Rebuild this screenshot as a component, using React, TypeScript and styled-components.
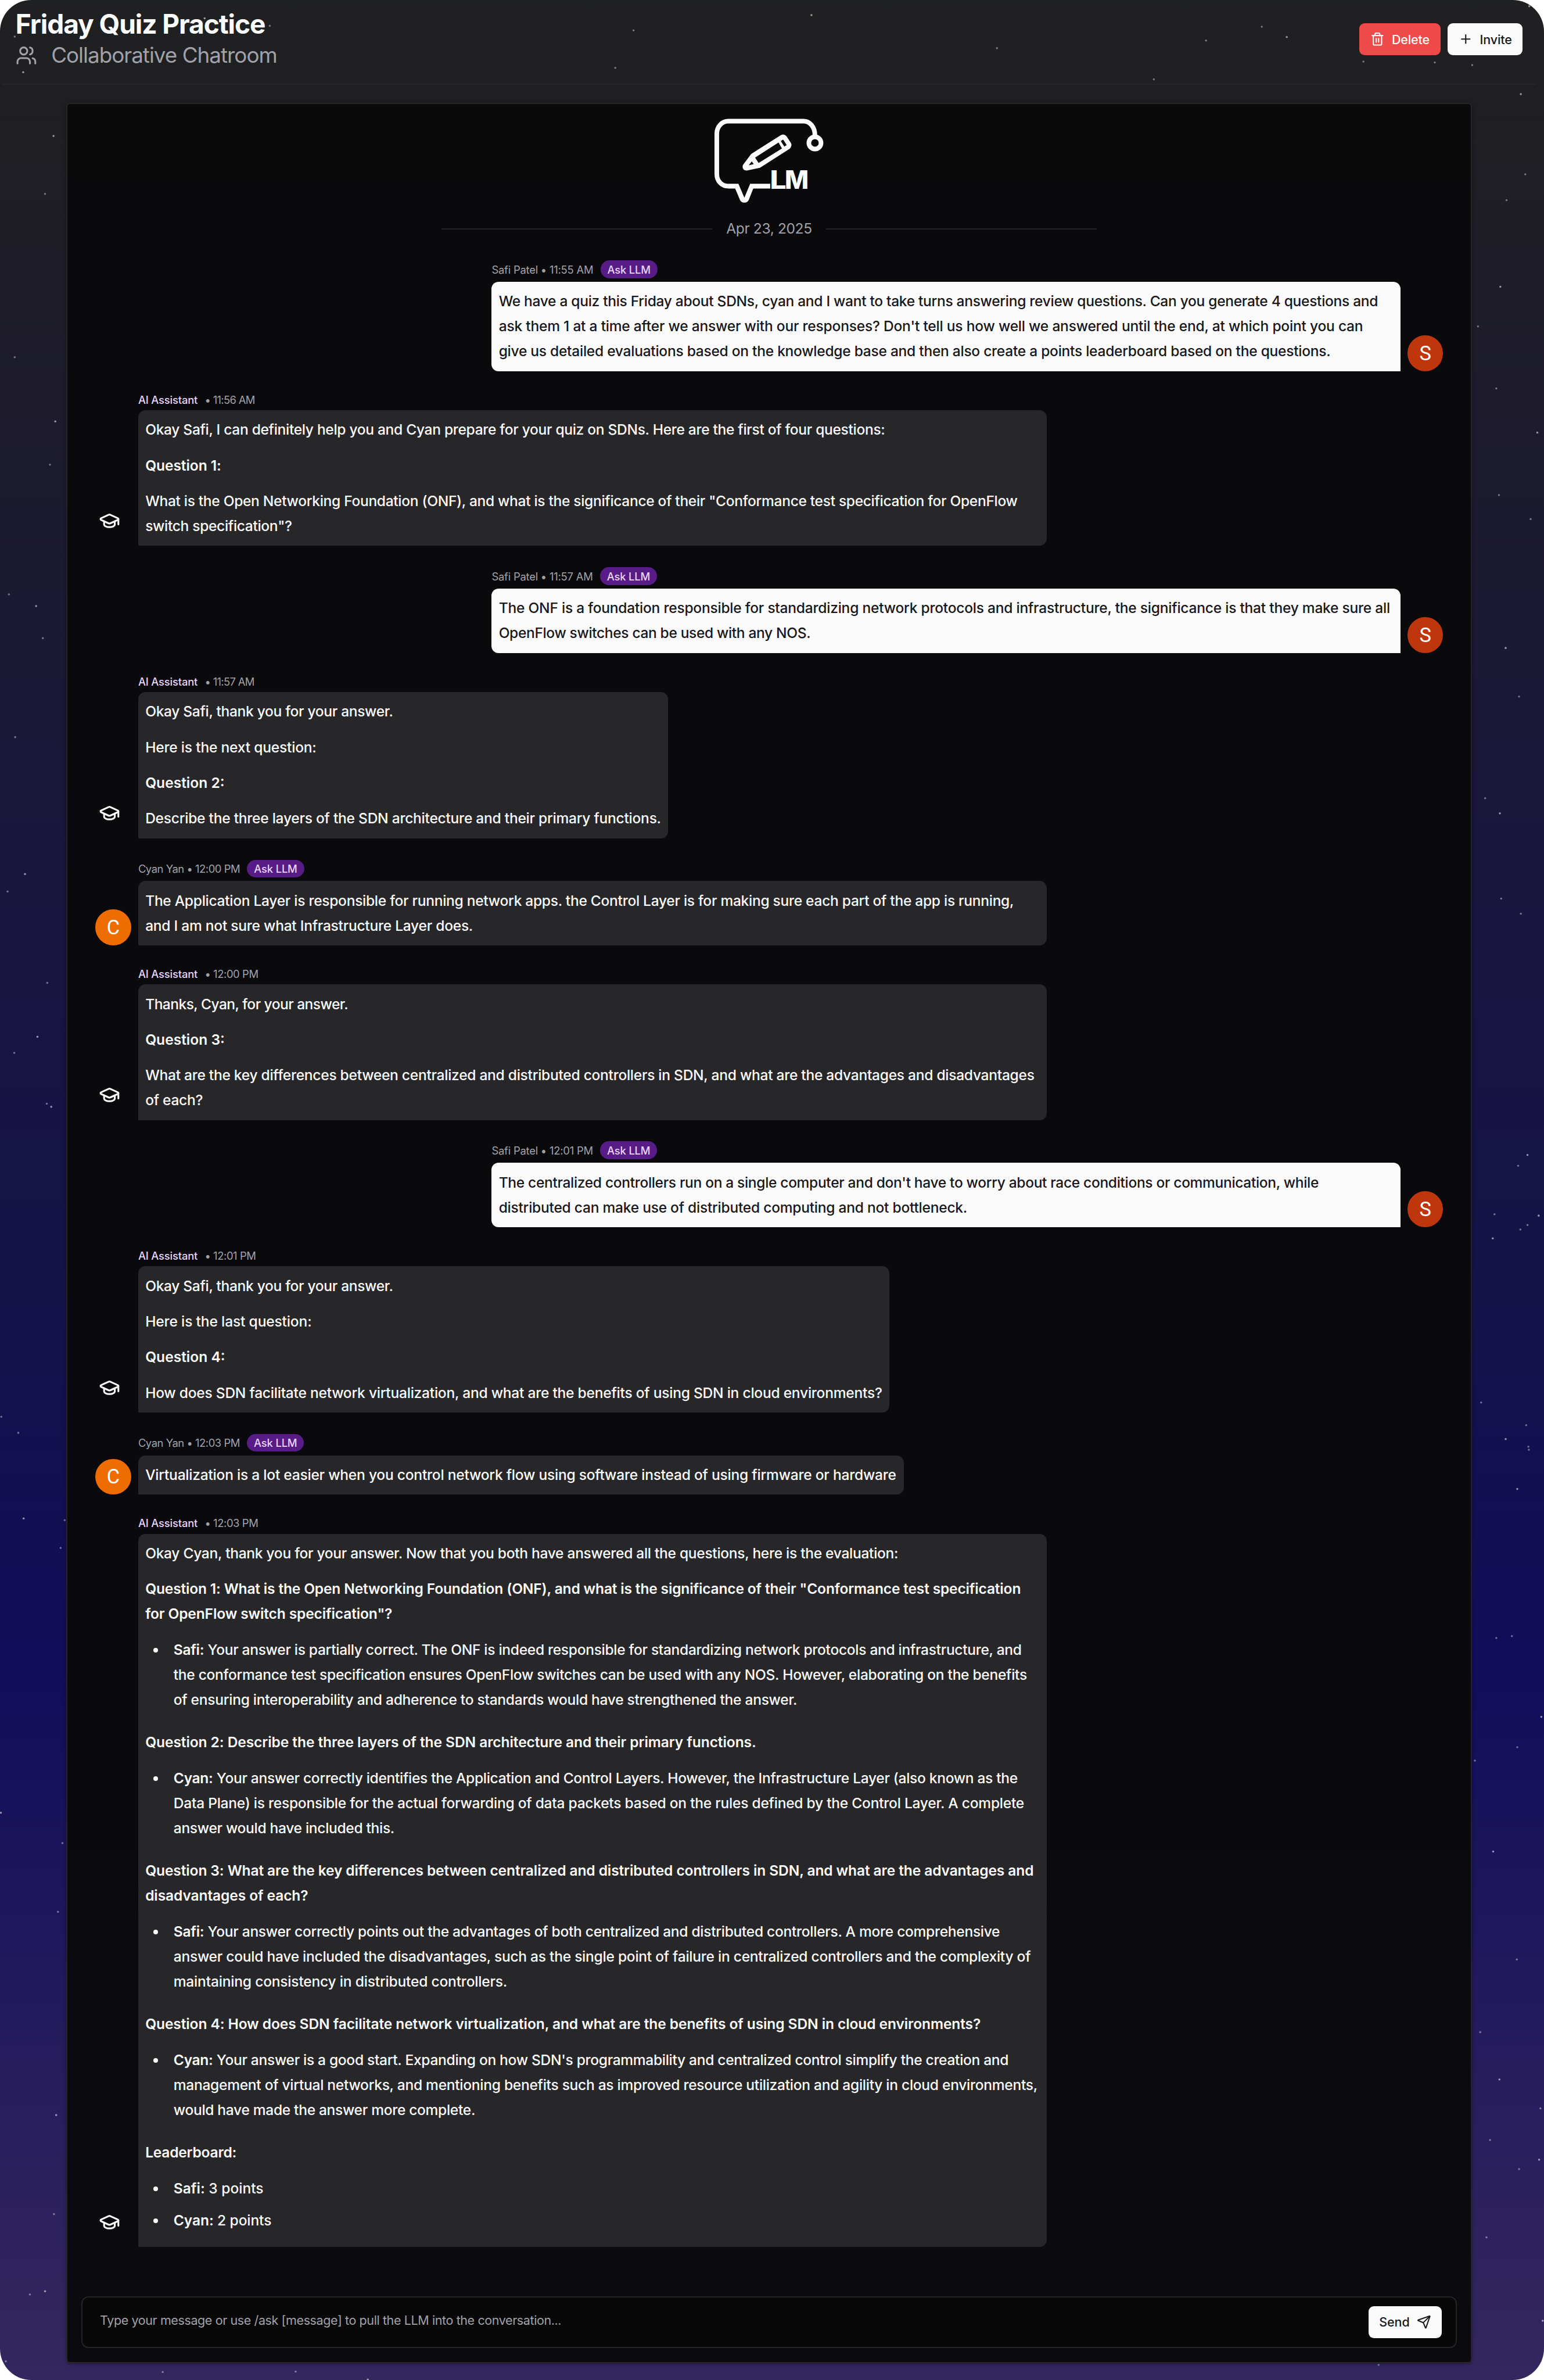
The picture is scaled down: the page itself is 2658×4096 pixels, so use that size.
import React from "react";
import styled, { createGlobalStyle, css } from "styled-components";
import { GraduationCap, Plus, Send, Trash2, Users } from "lucide-react";

const Global = createGlobalStyle`
  html { font-size: 24.5613px; background: #fff; }
  body { margin: 0; background: #fff; -webkit-font-smoothing: antialiased; }
  *, *::before, *::after { box-sizing: border-box; }
`;

const Page = styled.div`
  position: relative;
  width: 2658px;
  height: 4096px;
  overflow: hidden;
  border-radius: 2.2rem;
  background: linear-gradient(
    180deg,
    #1f2021 0%,
    #1f1f23 5%,
    #1c1a30 22%,
    #181540 40%,
    #151249 54%,
    #110d59 70%,
    #241b5d 85%,
    #34275f 100%
  );
  color: #fafafa;
  font-family: Inter, "Liberation Sans", sans-serif;
  font-size: 1rem;
  display: flex;
  flex-direction: column;
`;

const Starfield = styled.svg`
  position: absolute;
  inset: 0;
  width: 100%;
  height: 100%;
`;

const Header = styled.header`
  position: relative;
  flex: none;
  display: flex;
  justify-content: space-between;
  align-items: flex-start;
  height: 5.9375rem;
  margin: 0 0.5rem 0 0.09rem;
  padding: 0 1rem;
  border-bottom: 2px solid #262628;
`;

const Heading = styled.div`
  padding-top: 0.69rem;
`;

const Title = styled.h1`
  margin: 0 0 0.44rem;
  font-size: 1.875rem;
  line-height: 2rem;
  font-weight: 700;
  letter-spacing: -0.0235em;
  white-space: nowrap;
`;

const Subtitle = styled.div`
  display: flex;
  align-items: center;
  gap: 1rem;
  height: 1.5rem;
  color: #a1a1aa;
  font-size: 1.5rem;
  line-height: 1.5rem;
  letter-spacing: -0.027em;
  white-space: nowrap;
  svg {
    width: 1.5rem;
    height: 1.5rem;
  }
`;

const Actions = styled.div`
  display: flex;
  gap: 0.5rem;
  padding-top: 1.625rem;
`;

const Button = styled.button<{ $tone?: "danger" | "light"; $w: number }>`
  display: flex;
  align-items: center;
  justify-content: center;
  gap: 0.5rem;
  flex: none;
  width: ${(p) => p.$w}rem;
  height: 2.25rem;
  padding: 0;
  border: 0;
  border-radius: 0.375rem;
  font-family: inherit;
  font-size: 0.875rem;
  font-weight: 500;
  letter-spacing: -0.005em;
  white-space: nowrap;
  background: ${(p) => (p.$tone === "danger" ? "#ee4a49" : "#fafafa")};
  color: ${(p) => (p.$tone === "danger" ? "#fafafa" : "#18181b")};
  svg {
    width: 1rem;
    height: 1rem;
  }
`;

const Panel = styled.main`
  position: relative;
  flex: none;
  display: flex;
  flex-direction: column;
  width: 98.5625rem;
  height: 158.4rem;
  margin: 1.25rem 0 0 4.625rem;
  border: 2px solid #252527;
  border-radius: 0.25rem;
  background: rgba(9, 9, 11, 0.95);
  box-shadow: 0 0.06rem 0.2rem rgba(0, 0, 0, 0.35);
`;

const Logo = styled.svg`
  display: block;
  width: 7.625rem;
  height: 5.906rem;
  margin: 1.04rem auto 0;
  fill: #fafafa;
`;

const DateRow = styled.div`
  display: flex;
  align-items: center;
  width: 45.9rem;
  margin: 1.19rem auto 1.6rem;
  color: #a1a1aa;
  font-size: 1rem;
  line-height: 1.25rem;
  letter-spacing: -0.0156em;
`;

const Rule = styled.span`
  flex: 1;
  height: 2px;
  background: #242427;
`;

const DateText = styled.span`
  width: 8rem;
  text-align: center;
  white-space: nowrap;
`;

const Chat = styled.section`
  display: flex;
  flex-direction: column;
  gap: 1.5rem;
  padding: 0 1.96rem 0 1.98rem;
`;

const Row = styled.article<{ $own?: boolean }>`
  display: flex;
  align-items: flex-end;
  justify-content: ${(p) => (p.$own ? "flex-end" : "flex-start")};
  gap: 0.5rem;
`;

const Avatar = styled.div<{ $color: string }>`
  display: flex;
  align-items: center;
  justify-content: center;
  flex: none;
  width: 2.5rem;
  height: 2.5rem;
  border-radius: 50%;
  background: ${(p) => p.$color};
  color: #fff;
  font-family: Roboto, sans-serif;
  font-size: 1.4rem;
`;

const Bot = styled.div`
  flex: none;
  width: 2.5rem;
  padding: 0 0 1rem 0.25rem;
  svg {
    display: block;
    width: 1.5rem;
    height: 1.5rem;
  }
`;

const Column = styled.div<{ $w: number }>`
  flex: none;
  width: ${(p) => p.$w}rem;
`;

const Meta = styled.div<{ $tall?: boolean }>`
  display: flex;
  align-items: center;
  height: ${(p) => (p.$tall ? 1.25 : 1)}rem;
  margin-bottom: 0.25rem;
  color: #a1a1aa;
  font-size: 0.75rem;
  letter-spacing: -0.01em;
  white-space: nowrap;
`;

const MetaText = styled.span<{ $t: number }>`
  letter-spacing: ${(p) => p.$t}em;
`;

const BotName = styled.span`
  margin-right: 0.5rem;
  color: #e9d5ff;
  font-weight: 500;
`;

const Badge = styled.span`
  display: flex;
  align-items: center;
  justify-content: center;
  width: 4rem;
  height: 1.25rem;
  margin-left: 0.5rem;
  border-radius: 0.625rem;
  background: #581c87;
  color: #e9d5ff;
  font-weight: 500;
`;

const Bubble = styled.div<{ $own?: boolean }>`
  display: flex;
  flex-direction: column;
  gap: 0.75rem;
  padding: 0.5rem;
  line-height: 1.75rem;
  font-weight: 500;
  ${(p) =>
    p.$own
      ? css`
          border-radius: 0.5rem 0.5rem 0 0.5rem;
          background: #fafafa;
          color: #18181b;
        `
      : css`
          border-radius: 0.5rem 0.5rem 0.5rem 0;
          background: #27272a;
          color: #fafafa;
        `}
`;

const Paragraph = styled.p<{ $strong?: boolean }>`
  margin: 0;
  font-weight: ${(p) => (p.$strong ? 600 : "inherit")};
`;

const List = styled.ul`
  margin: 0;
  padding: 0;
  list-style: none;
`;

const Item = styled.li`
  display: flex;
  margin-bottom: 0.5rem;
  &::before {
    content: "";
    flex: none;
    width: 0.32rem;
    height: 0.32rem;
    margin: 0.74rem 1.1rem 0 0.56rem;
    border-radius: 50%;
    background: #fafafa;
  }
`;

const Line = styled.span<{ $t?: number }>`
  display: block;
  white-space: nowrap;
  letter-spacing: ${(p) => p.$t ?? 0}em;
`;

const Strong = styled.b`
  font-weight: 600;
`;

const Composer = styled.div`
  display: flex;
  align-items: center;
  justify-content: space-between;
  height: 3.625rem;
  margin: auto 1rem 0.98rem;
  padding: 0 0.98rem 0 1.22rem;
  border: 2px solid #252527;
  border-radius: 0.5rem;
  background: #080809;
  color: #a1a1aa;
  font-size: 0.875rem;
`;

const Placeholder = styled.span`
  padding-bottom: 0.27rem;
  letter-spacing: -0.018em;
  white-space: nowrap;
`;

/* A line of text and its tracking in em. */
type TextLine = [string, number];

type Block =
  | { kind: "p" | "strong"; lines: TextLine[] }
  | { kind: "list"; items: { who: string; lines: TextLine[] }[] };

type Message = {
  from: "Safi Patel" | "Cyan Yan" | "AI Assistant";
  time: string;
  width: number;
  blocks: Block[];
};

const FULL = 63.6875;

const messages: Message[] = [
  {
    from: "Safi Patel", time: "11:55 AM", width: FULL,
    blocks: [{ kind: "p", lines: [
      ["We have a quiz this Friday about SDNs, cyan and I want to take turns answering review questions. Can you generate 4 questions and", -0.0125],
      ["ask them 1 at a time after we answer with our responses? Don't tell us how well we answered until the end, at which point you can", -0.0087],
      ["give us detailed evaluations based on the knowledge base and then also create a points leaderboard based on the questions.", -0.0108],
    ] }],
  },
  {
    from: "AI Assistant", time: "11:56 AM", width: FULL,
    blocks: [
      { kind: "p", lines: [["Okay Safi, I can definitely help you and Cyan prepare for your quiz on SDNs. Here are the first of four questions:", -0.0126]] },
      { kind: "strong", lines: [["Question 1:", -0.003]] },
      { kind: "p", lines: [
        ["What is the Open Networking Foundation (ONF), and what is the significance of their \"Conformance test specification for OpenFlow", -0.0128],
        ["switch specification\"?", -0.013],
      ] },
    ],
  },
  {
    from: "Safi Patel", time: "11:57 AM", width: FULL,
    blocks: [{ kind: "p", lines: [
      ["The ONF is a foundation responsible for standardizing network protocols and infrastructure, the significance is that they make sure all", -0.0095],
      ["OpenFlow switches can be used with any NOS.", -0.0145],
    ] }],
  },
  {
    from: "AI Assistant", time: "11:57 AM", width: 37.14,
    blocks: [
      { kind: "p", lines: [["Okay Safi, thank you for your answer.", -0.013]] },
      { kind: "p", lines: [["Here is the next question:", -0.008]] },
      { kind: "strong", lines: [["Question 2:", 0]] },
      { kind: "p", lines: [["Describe the three layers of the SDN architecture and their primary functions.", -0.0102]] },
    ],
  },
  {
    from: "Cyan Yan", time: "12:00 PM", width: FULL,
    blocks: [{ kind: "p", lines: [
      ["The Application Layer is responsible for running network apps. the Control Layer is for making sure each part of the app is running,", -0.0116],
      ["and I am not sure what Infrastructure Layer does.", -0.0102],
    ] }],
  },
  {
    from: "AI Assistant", time: "12:00 PM", width: FULL,
    blocks: [
      { kind: "p", lines: [["Thanks, Cyan, for your answer.", -0.0219]] },
      { kind: "strong", lines: [["Question 3:", 0]] },
      { kind: "p", lines: [
        ["What are the key differences between centralized and distributed controllers in SDN, and what are the advantages and disadvantages", -0.0111],
        ["of each?", -0.011],
      ] },
    ],
  },
  {
    from: "Safi Patel", time: "12:01 PM", width: FULL,
    blocks: [{ kind: "p", lines: [
      ["The centralized controllers run on a single computer and don't have to worry about race conditions or communication, while", -0.0136],
      ["distributed can make use of distributed computing and not bottleneck.", -0.01],
    ] }],
  },
  {
    from: "AI Assistant", time: "12:01 PM", width: 52.65,
    blocks: [
      { kind: "p", lines: [["Okay Safi, thank you for your answer.", -0.013]] },
      { kind: "p", lines: [["Here is the last question:", -0.006]] },
      { kind: "strong", lines: [["Question 4:", 0]] },
      { kind: "p", lines: [["How does SDN facilitate network virtualization, and what are the benefits of using SDN in cloud environments?", -0.0097]] },
    ],
  },
  {
    from: "Cyan Yan", time: "12:03 PM", width: 53.65,
    blocks: [{ kind: "p", lines: [["Virtualization is a lot easier when you control network flow using software instead of using firmware or hardware", -0.0092]] }],
  },
  {
    from: "AI Assistant", time: "12:03 PM", width: FULL,
    blocks: [
      { kind: "p", lines: [["Okay Cyan, thank you for your answer. Now that you both have answered all the questions, here is the evaluation:", -0.0119]] },
      { kind: "strong", lines: [
        ["Question 1: What is the Open Networking Foundation (ONF), and what is the significance of their \"Conformance test specification", -0.0071],
        ["for OpenFlow switch specification\"?", -0.0055],
      ] },
      { kind: "list", items: [{ who: "Safi:", lines: [
        [" Your answer is partially correct. The ONF is indeed responsible for standardizing network protocols and infrastructure, and", -0.0122],
        ["the conformance test specification ensures OpenFlow switches can be used with any NOS. However, elaborating on the benefits", -0.0119],
        ["of ensuring interoperability and adherence to standards would have strengthened the answer.", -0.0112],
      ] }] },
      { kind: "strong", lines: [["Question 2: Describe the three layers of the SDN architecture and their primary functions.", -0.0035]] },
      { kind: "list", items: [{ who: "Cyan:", lines: [
        [" Your answer correctly identifies the Application and Control Layers. However, the Infrastructure Layer (also known as the", -0.0126],
        ["Data Plane) is responsible for the actual forwarding of data packets based on the rules defined by the Control Layer. A complete", -0.01],
        ["answer would have included this.", -0.0125],
      ] }] },
      { kind: "strong", lines: [
        ["Question 3: What are the key differences between centralized and distributed controllers in SDN, and what are the advantages and", -0.0046],
        ["disadvantages of each?", -0.0045],
      ] },
      { kind: "list", items: [{ who: "Safi:", lines: [
        [" Your answer correctly points out the advantages of both centralized and distributed controllers. A more comprehensive", -0.0117],
        ["answer could have included the disadvantages, such as the single point of failure in centralized controllers and the complexity of", -0.0104],
        ["maintaining consistency in distributed controllers.", -0.008],
      ] }] },
      { kind: "strong", lines: [["Question 4: How does SDN facilitate network virtualization, and what are the benefits of using SDN in cloud environments?", -0.0044]] },
      { kind: "list", items: [{ who: "Cyan:", lines: [
        [" Your answer is a good start. Expanding on how SDN's programmability and centralized control simplify the creation and", -0.0125],
        ["management of virtual networks, and mentioning benefits such as improved resource utilization and agility in cloud environments,", -0.0113],
        ["would have made the answer more complete.", -0.0125],
      ] }] },
      { kind: "strong", lines: [["Leaderboard:", -0.009]] },
      { kind: "list", items: [
        { who: "Safi:", lines: [[" 3 points", 0]] },
        { who: "Cyan:", lines: [[" 2 points", -0.004]] },
      ] },
    ],
  },
];

const stars: [number, number][] = [
  [459, 41], [605, 58], [33, 82], [52, 162], [2705, 91], [2830, 60], [2886, 83], [3058, 138], [3218, 140], [3430, 14],
  [1380, 152], [1421, 68], [1820, 34], [2236, 108], [2588, 178],
  [120, 305], [101, 435], [33, 801], [124, 945], [112, 1042], [20, 1333], [81, 1359], [96, 1431], [34, 1653], [56, 1960],
  [17, 1999], [106, 2204], [84, 2325], [32, 2361], [105, 2475], [115, 2482], [3, 3177], [41, 3213], [53, 3405], [145, 3409],
  [136, 3471], [2, 4065], [140, 4133], [130, 4287], [126, 4743], [121, 4965], [67, 5145], [101, 5138], [13, 5295],
  [3302, 146], [3411, 211], [3421, 391], [3379, 449], [3365, 643], [3315, 732], [3356, 871], [3448, 970], [3362, 1110],
  [3433, 1164], [3377, 1453], [3407, 1562], [3331, 1790], [3364, 1824], [3367, 2015], [3411, 2049], [3426, 2590],
  [3405, 2614], [3352, 2723], [3451, 2726], [3426, 2747], [3410, 2757], [3348, 2777], [3322, 3145], [3423, 3196],
  [3377, 3227], [3428, 3244], [3429, 3251], [3403, 3339], [3356, 3673], [3391, 3669], [3457, 3850], [3403, 3918],
  [3308, 3948], [3349, 4152], [3402, 4394], [3320, 4557], [3363, 4663], [3455, 4728], [3342, 4799], [3452, 4843],
  [3407, 4864], [3334, 5017], [3460, 5204], [365, 5319], [663, 5318], [825, 5336], [3092, 5303],
];

function Lines({ lines, who }: { lines: TextLine[]; who?: string }) {
  return (
    <>
      {lines.map(([text, tracking], i) => (
        <Line key={i} $t={tracking}>
          {i === 0 && who ? <Strong>{who}</Strong> : null}
          {text}
        </Line>
      ))}
    </>
  );
}

function BlockView({ block }: { block: Block }) {
  if (block.kind === "list") {
    return (
      <List>
        {block.items.map((item) => (
          <Item key={item.who}>
            <div>
              <Lines lines={item.lines} who={item.who} />
            </div>
          </Item>
        ))}
      </List>
    );
  }
  return (
    <Paragraph $strong={block.kind === "strong"}>
      <Lines lines={block.lines} />
    </Paragraph>
  );
}

function MessageRow({ message }: { message: Message }) {
  const own = message.from === "Safi Patel";
  const bot = message.from === "AI Assistant";
  return (
    <Row $own={own}>
      {bot && (
        <Bot>
          <GraduationCap />
        </Bot>
      )}
      {message.from === "Cyan Yan" && <Avatar $color="#ef6c00">C</Avatar>}
      <Column $w={message.width}>
        {bot ? (
          <Meta>
            <BotName>AI Assistant</BotName>
            <MetaText $t={message.time.startsWith("11") ? -0.036 : -0.0225}>• {message.time}</MetaText>
          </Meta>
        ) : (
          <Meta $tall>
            <MetaText $t={own ? -0.012 : -0.025}>
              {message.from} • {message.time}
            </MetaText>
            <Badge>Ask LLM</Badge>
          </Meta>
        )}
        <Bubble $own={own}>
          {message.blocks.map((block, i) => (
            <BlockView key={i} block={block} />
          ))}
        </Bubble>
      </Column>
      {own && <Avatar $color="#bf360c">S</Avatar>}
    </Row>
  );
}

function BrandLogo() {
  return (
    <Logo viewBox="309 139 732 567">
      <path
        d="M985 252 C985 196 950 156.5 908 156.5 H402 C358 156.5 324.5 195 324.5 240 V512 C324.5 560 358 594 402 594"
        fill="none"
        stroke="#fafafa"
        strokeWidth="31"
      />
      <path d="M400 578 H470 L510 672 L549 578 H684 V610 H570 L540 685 Q532 705 510 705 Q488 705 480 685 L448 610 H400Z" />
      <circle cx="985" cy="303" r="41" fill="none" stroke="#fafafa" strokeWidth="31" />
      <path
        fillRule="evenodd"
        d="M556 377 L756 250 Q778 240 793 257 L824 304 Q833 325 815 342 L615 470 L527 489 Q504 489 499 470 Q496 458 503 448Z M582 402 L606 438 L763 340 L740 300Z M755 290 L779 328 L795 318 L771 281Z M560 427 L539 454 L573 446Z"
      />
      <text x="682" y="612" fontFamily="Inter, sans-serif" fontSize="169" fontWeight="800" textLength="110" lengthAdjust="spacingAndGlyphs">L</text>
      <text x="782" y="612" fontFamily="Inter, sans-serif" fontSize="169" fontWeight="800" textLength="161" lengthAdjust="spacingAndGlyphs">M</text>
    </Logo>
  );
}

export default function App() {
  return (
    <>
      <Global />
      <Page>
        <Starfield viewBox="0 0 3463 5337" preserveAspectRatio="none">
          {stars.map(([x, y], i) => (
            <circle key={i} cx={x} cy={y} r={2.3} fill="#fff" opacity={i % 3 === 0 ? 0.55 : 0.4} />
          ))}
        </Starfield>
        <Header>
          <Heading>
            <Title>Friday Quiz Practice</Title>
            <Subtitle>
              <Users />
              <span>Collaborative Chatroom</span>
            </Subtitle>
          </Heading>
          <Actions>
            <Button $tone="danger" $w={5.69}>
              <Trash2 />
              Delete
            </Button>
            <Button $tone="light" $w={5.25}>
              <Plus />
              Invite
            </Button>
          </Actions>
        </Header>
        <Panel>
          <BrandLogo />
          <DateRow>
            <Rule />
            <DateText>Apr 23, 2025</DateText>
            <Rule />
          </DateRow>
          <Chat>
            {messages.map((message, i) => (
              <MessageRow key={i} message={message} />
            ))}
          </Chat>
          <Composer>
            <Placeholder>Type your message or use /ask [message] to pull the LLM into the conversation...</Placeholder>
            <Button $w={5.125}>
              Send
              <Send />
            </Button>
          </Composer>
        </Panel>
      </Page>
    </>
  );
}
